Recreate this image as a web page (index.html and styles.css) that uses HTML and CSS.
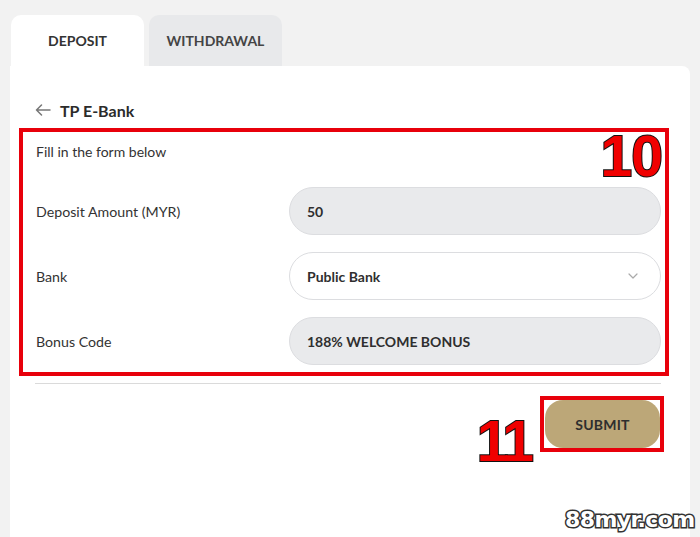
FILE: index.html
```html
<!DOCTYPE html>
<html lang="en">
<head>
<meta charset="utf-8">
<title>Deposit</title>
<link rel="stylesheet" href="styles.css">
</head>
<body>
<div class="page">
  <div class="tabs">
    <div class="tab active">DEPOSIT</div>
    <div class="tab">WITHDRAWAL</div>
  </div>
  <div class="card">
    <div class="header">
      <svg class="back" width="16" height="12" viewBox="0 0 16 12"><path d="M15 6H1.5M6.5 1L1.5 6l5 5" fill="none" stroke="#777" stroke-width="1.5" stroke-linecap="round" stroke-linejoin="round"/></svg>
      <span class="title">TP E-Bank</span>
    </div>
    <div class="form-area">
      <div class="intro">Fill in the form below</div>
      <div class="row">
        <div class="label">Deposit Amount (MYR)</div>
        <div class="field filled">50</div>
      </div>
      <div class="row">
        <div class="label">Bank</div>
        <div class="field select">
          <span>Public Bank</span>
          <svg class="chev" width="10" height="6" viewBox="0 0 10 6"><path d="M1 1l4 4 4-4" fill="none" stroke="#aaa" stroke-width="1.2" stroke-linecap="round" stroke-linejoin="round"/></svg>
        </div>
      </div>
      <div class="row">
        <div class="label">Bonus Code</div>
        <div class="field filled">188% WELCOME BONUS</div>
      </div>
      <div class="mark-box form-mark"></div>
      <div class="num num-10">10</div>
    </div>
    <div class="divider"></div>
    <div class="actions">
      <div class="submit-wrap">
        <div class="num num-11">11</div>
        <button class="submit">SUBMIT</button>
        <div class="mark-box submit-mark"></div>
      </div>
    </div>
  </div>
  <div class="watermark">88myr.com</div>
</div>
</body>
</html>
```

FILE: styles.css
```css
* { box-sizing: border-box; }
html, body { margin: 0; padding: 0; }
body {
  width: 700px;
  height: 537px;
  overflow: hidden;
  background: #f2f2f2;
  font-family: Lato, "Noto Sans", sans-serif;
  color: #333;
}
.page {
  position: relative;
  height: 537px;
  padding-top: 15px;
}
.tabs {
  display: flex;
  gap: 5px;
  padding-left: 11px;
}
.tab {
  height: 51px;
  width: 133px;
  display: flex;
  align-items: center;
  justify-content: center;
  font-size: 14px;
  font-weight: 700;
  color: #444;
  background: #e8e9eb;
  border-radius: 10px 10px 0 0;
}
.tab.active {
  background: #fff;
  color: #333;
}
.card {
  margin-left: 10px;
  width: 680px;
  height: 471px;
  background: #fff;
  border-radius: 0 8px 0 0;
  padding: 34px 29px 0 25px;
}
.header {
  display: flex;
  align-items: center;
  gap: 9px;
  height: 20px;
}
.back { flex: none; }
.title {
  font-size: 16px;
  font-weight: 700;
  color: #2b2b2b;
}
.form-area {
  position: relative;
  margin-top: 22px;
}
.intro {
  font-size: 14px;
  line-height: 20px;
  padding-left: 1px;
  margin-bottom: 25px;
}
.row {
  display: flex;
  align-items: center;
  margin-bottom: 17px;
}
.row:last-of-type { margin-bottom: 0; }
.label {
  width: 254px;
  flex: none;
  font-size: 14.2px;
  padding-left: 1px;
}
.field {
  flex: 1;
  height: 48px;
  border-radius: 24px;
  border: 1px solid #dcdde0;
  display: flex;
  align-items: center;
  justify-content: space-between;
  padding: 0 22px 0 17px;
  font-size: 14px;
  font-weight: 700;
  color: #2f2f2f;
}
.field.filled { background: #e9eaec; }
.field.select { background: #fff; }
.chev { flex: none; }
.divider {
  margin-top: 18px;
  height: 1px;
  background: #dadada;
}
.actions {
  display: flex;
  justify-content: flex-end;
  padding-top: 16px;
  padding-right: 1px;
}
.submit-wrap { position: relative; }
.submit {
  width: 115px;
  height: 48px;
  border: none;
  border-radius: 18px;
  background: #bca778;
  font-family: Lato, "Noto Sans", sans-serif;
  font-size: 14px;
  font-weight: 700;
  color: #2e2e2e;
  letter-spacing: 0.2px;
}
.mark-box {
  position: absolute;
  border: 4px solid #e8000b;
  pointer-events: none;
}
.form-mark {
  top: -14px;
  left: -16px;
  right: -8px;
  bottom: -11px;
}
.submit-mark {
  top: -4px;
  left: -5px;
  right: -4px;
  bottom: -4px;
}
.num {
  position: absolute;
  font-family: "Liberation Sans", Arial, sans-serif;
  font-weight: 700;
  font-size: 57px;
  line-height: 1;
  color: #f00000;
  -webkit-text-stroke: 2px #111;
  paint-order: stroke fill;
}
.num-10 {
  top: -14px;
  right: -1px;
  letter-spacing: -1px;
}
.num-11 {
  top: 13px;
  right: 129px;
  letter-spacing: -3px;
}
.watermark {
  position: absolute;
  left: 565px;
  top: 506px;
  font-family: "DejaVu Sans", sans-serif;
  font-weight: 700;
  font-size: 22px;
  line-height: 28px;
  color: #fff;
  -webkit-text-stroke: 3px #333;
  paint-order: stroke fill;
  letter-spacing: -0.6px;
}
```
